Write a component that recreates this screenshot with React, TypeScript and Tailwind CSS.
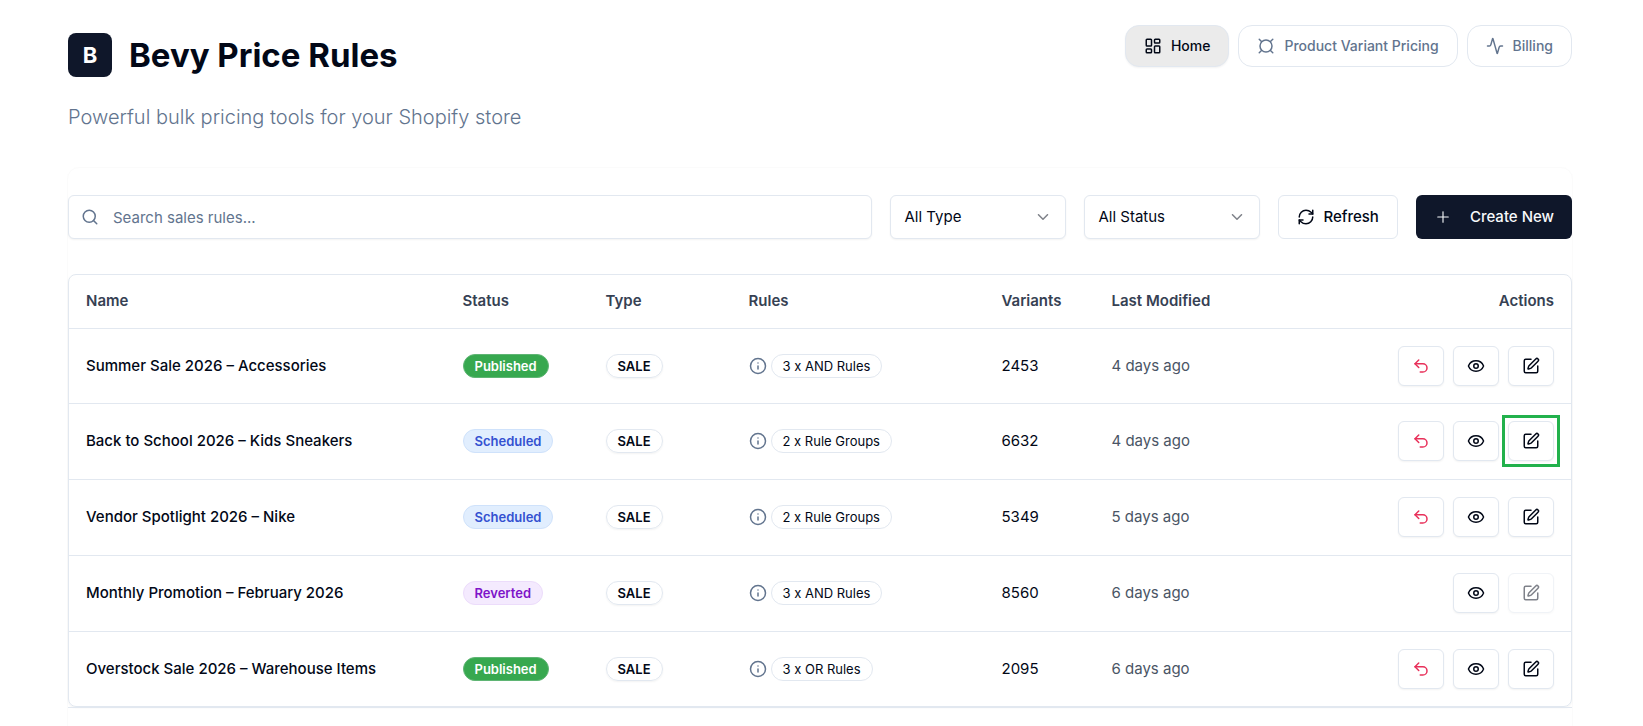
import type { ComponentType } from 'react'
import {
  Activity,
  ChevronDown,
  Currency,
  Eye,
  Info,
  LayoutDashboard,
  Plus,
  RefreshCw,
  Search,
  SquarePen,
  Undo2,
} from 'lucide-react'
import { clsx } from 'clsx'

type Status = 'Published' | 'Scheduled' | 'Reverted'

interface SalesRule {
  name: string
  status: Status
  type: string
  rules: string
  variants: number
  modified: string
  highlighted?: boolean
}

const SALES_RULES: SalesRule[] = [
  { name: 'Summer Sale 2026 – Accessories', status: 'Published', type: 'SALE', rules: '3 x AND Rules', variants: 2453, modified: '4 days ago' },
  { name: 'Back to School 2026 – Kids Sneakers', status: 'Scheduled', type: 'SALE', rules: '2 x Rule Groups', variants: 6632, modified: '4 days ago', highlighted: true },
  { name: 'Vendor Spotlight 2026 – Nike', status: 'Scheduled', type: 'SALE', rules: '2 x Rule Groups', variants: 5349, modified: '5 days ago' },
  { name: 'Monthly Promotion – February 2026', status: 'Reverted', type: 'SALE', rules: '3 x AND Rules', variants: 8560, modified: '6 days ago' },
  { name: 'Overstock Sale 2026 – Warehouse Items', status: 'Published', type: 'SALE', rules: '3 x OR Rules', variants: 2095, modified: '6 days ago' },
]

const STATUS_CLASSES: Record<Status, string> = {
  Published: 'border-[#5fb574] bg-[#37a84f] text-white',
  Scheduled: 'border-[#cfe2fb] bg-[#e1eefe] text-[#3451d1]',
  Reverted: 'border-[#ecdcfb] bg-[#f4eafe] text-[#7e14c9]',
}

const badgeClass = 'inline-flex h-6 items-center rounded-full border px-[11px] text-[13px] leading-4'
const iconBtnClass =
  'flex h-10 w-[46px] items-center justify-center rounded-md border border-slate-200 bg-white text-[#020817] shadow-xs disabled:opacity-50'

function NavLink({
  label,
  icon: Icon,
  active,
}: {
  label: string
  icon: ComponentType<{ className?: string }>
  active?: boolean
}) {
  return (
    <a
      href="#"
      aria-current={active ? 'page' : undefined}
      className={clsx(
        'flex h-[42px] items-center gap-[9px] rounded-[14px] border border-slate-200 px-[18px] text-[14px] font-medium',
        active ? 'bg-[#ebebeb] text-[#020817] shadow-xs' : 'bg-white text-slate-500',
      )}
    >
      <Icon className="size-[18px]" />
      {label}
    </a>
  )
}

function FilterSelect({ label, options }: { label: string; options: string[] }) {
  return (
    <div className="relative w-44">
      <select
        aria-label={label}
        className="h-11 w-full appearance-none rounded-md border border-slate-200 bg-white px-[13px] text-[15px] shadow-xs"
      >
        {options.map((o) => (
          <option key={o}>{o}</option>
        ))}
      </select>
      <ChevronDown className="pointer-events-none absolute top-[13px] right-[14px] size-[18px] opacity-50" />
    </div>
  )
}

function RuleRow({ rule }: { rule: SalesRule }) {
  const reverted = rule.status === 'Reverted'
  return (
    <tr className="h-[76px] border-b border-slate-200 first:h-[75px] last:h-[75px] last:border-b-0">
      <td className="px-[17px] font-medium">{rule.name}</td>
      <td className="px-[18px]">
        <span className={clsx(badgeClass, 'font-semibold', STATUS_CLASSES[rule.status])}>{rule.status}</span>
      </td>
      <td className="px-[18px]">
        <span className={clsx(badgeClass, 'border-slate-200 font-semibold shadow-xs')}>{rule.type}</span>
      </td>
      <td className="px-[18px]">
        <div className="flex items-center gap-1">
          <Info className="size-[18px] text-slate-500" />
          <span className={clsx(badgeClass, 'border-slate-200')}>{rule.rules}</span>
        </div>
      </td>
      <td className="px-[18px]">{rule.variants}</td>
      <td className="px-[18px] text-gray-600">{rule.modified}</td>
      <td className="px-[17px]">
        <div className="flex justify-end gap-[9px]">
          {!reverted && (
            <button type="button" aria-label="Revert" className={iconBtnClass}>
              <Undo2 className="size-[18px] text-[#e8305a]" />
            </button>
          )}
          <button type="button" aria-label="View" className={iconBtnClass}>
            <Eye className="size-[18px]" />
          </button>
          <div className="relative">
            <button type="button" aria-label="Edit" disabled={reverted} className={iconBtnClass}>
              <SquarePen className="size-[18px]" />
            </button>
            {rule.highlighted && (
              <span className="pointer-events-none absolute -inset-[6px] border-3 border-[#22b14c]" />
            )}
          </div>
        </div>
      </td>
    </tr>
  )
}

export default function App() {
  return (
    <main className="min-h-screen bg-white pt-[25px] pr-[71px] pl-[68px] font-['Inter',sans-serif] text-[15px] leading-5 text-[#020817]">
      <header className="flex items-start justify-between">
        <div className="pt-2">
          <div className="flex items-center gap-[17px]">
            <div className="flex size-11 items-center justify-center rounded-lg bg-[#0f172a] text-[22px] font-bold text-white">
              B
            </div>
            <h1 className="text-[33px] leading-10 font-bold">Bevy Price Rules</h1>
          </div>
          <p className="mt-[26px] text-[20px] leading-7 font-light text-slate-500">
            Powerful bulk pricing tools for your Shopify store
          </p>
        </div>
        <nav className="flex gap-[9px]">
          <NavLink label="Home" icon={LayoutDashboard} active />
          <NavLink label="Product Variant Pricing" icon={Currency} />
          <NavLink label="Billing" icon={Activity} />
        </nav>
      </header>

      <section className="-mx-px mt-9 rounded-xl border border-[#fbfbfb] pt-[27px] pb-9">
        <div className="flex gap-[18px]">
          <div className="relative flex-1">
            <Search className="absolute top-[13px] left-[13px] size-[18px] text-slate-500" />
            <input
              type="search"
              aria-label="Search sales rules"
              placeholder="Search sales rules..."
              className="h-11 w-full rounded-md border border-slate-200 bg-white pr-3 pl-11 text-[15px] shadow-xs placeholder:text-slate-500"
            />
          </div>
          <FilterSelect label="Type" options={['All Type', 'Sale']} />
          <FilterSelect label="Status" options={['All Status', 'Published', 'Scheduled', 'Reverted']} />
          <button
            type="button"
            className="flex h-11 items-center gap-2 rounded-md border border-slate-200 bg-white px-[18px] font-medium"
          >
            <RefreshCw className="size-[18px]" />
            Refresh
          </button>
          <button
            type="button"
            className="flex h-11 items-center gap-[18px] rounded-md bg-[#0f172a] px-[18px] font-medium text-slate-50"
          >
            <Plus className="size-[18px]" strokeWidth={1.5} />
            Create New
          </button>
        </div>

        <div className="mt-[35px] rounded-lg border border-slate-200 shadow-xs">
          <table className="w-full table-fixed text-left">
            <thead>
              <tr className="h-[53px] border-b border-slate-200 text-gray-700">
                <th className="w-1/4 px-[17px] font-semibold">Name</th>
                <th className="w-[143px] px-[18px] font-semibold">Status</th>
                <th className="w-[143px] px-[18px] font-semibold">Type</th>
                <th className="w-[253px] px-[18px] font-semibold">Rules</th>
                <th className="w-[110px] px-[18px] font-semibold">Variants</th>
                <th className="px-[18px] font-semibold">Last Modified</th>
                <th className="px-[17px] text-right font-semibold">Actions</th>
              </tr>
            </thead>
            <tbody>
              {SALES_RULES.map((r) => (
                <RuleRow key={r.name} rule={r} />
              ))}
            </tbody>
          </table>
        </div>
        <div className="border-t border-slate-200" />
      </section>
    </main>
  )
}
